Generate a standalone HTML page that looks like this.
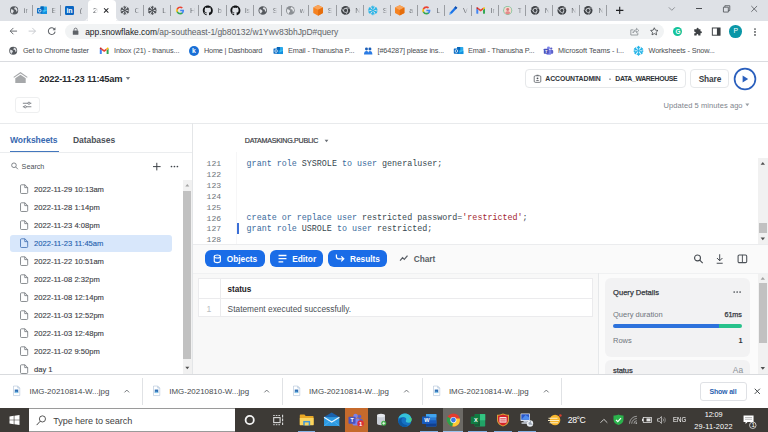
<!DOCTYPE html>
<html><head><meta charset="utf-8"><title>Worksheets - Snowflake</title>
<style>
*{box-sizing:border-box;margin:0;padding:0}
html,body{width:768px;height:432px;overflow:hidden;background:#fff}
body{position:relative;font-family:"Liberation Sans",sans-serif;color:#222}
.a{position:absolute;white-space:nowrap}
.t{position:absolute;white-space:nowrap;line-height:1}
svg{position:absolute;overflow:visible}
.tabt{font-size:7.4px;color:#6a6e73}
.sep{position:absolute;top:5px;width:1px;height:11px;background:#9a9da2}
.bmt{font-size:7.3px;color:#4a4d51;top:47.1px}
.ws{font-size:7.6px;color:#3c4046;-webkit-text-stroke:.12px #3c4046}
.ln{font-family:"Liberation Mono",monospace;font-size:8.1px;color:#70757b;text-align:right;width:20px;left:201.2px}
.code{font-family:"Liberation Mono",monospace;font-size:8.37px;color:#37474f;left:246.6px}
.kw{color:#3a6a9c}
.str{color:#a3262f}
.btn{position:absolute;height:17px;border-radius:6px;background:#1a6ce7;color:#fff;font-weight:bold;font-size:8.3px}
.dl{font-size:7.9px;color:#45494d;top:387.5px;letter-spacing:.02px}
</style></head><body>

<div class="a" style="left:0;top:0;width:768px;height:20.500px;background:#dee1e6"></div>
<div class="a" style="left:87.500px;top:0;width:28.500px;height:21px;background:#fff;border-radius:4px 4px 0 0"></div>
<svg style="left:83px;top:16px" width="5" height="5" viewBox="0 0 5 5"><g transform="translate(0.500 0.500) scale(1.0000)"><path d="M4 0v4H0a4 4 0 0 0 4-4z" fill="#fff"/></g></svg>
<svg style="left:116px;top:16px" width="5" height="5" viewBox="0 0 5 5"><g transform="translate(0.000 0.500) scale(1.0000)"><path d="M0 0v4h4a4 4 0 0 1-4-4z" fill="#fff"/></g></svg>
<svg style="left:10px;top:6px" width="9" height="9" viewBox="0 0 9 9"><svg x="0.000" y="0.300" width="8.200" height="8.200" viewBox="0 0 16 16" style="position:static"><circle cx="8" cy="8" r="8" fill="#55595e"/><path d="M2 6c2-.5 3 .5 4.500 1.500s1 2.500 0 3.500-1.500 2.500-2 3.500C2.500 13 1 10 2 6zM9 1.500c1 1 .5 2-.5 2.500s0 2 1.500 2 2.500 1.500 2 3 1.500 1.500 2.500 0c.8-3-1.500-6.500-5.500-7.500z" fill="#dfe1e5"/></svg></svg>
<div class="t tabt" style="left:23.8px;top:6.800px;width:4.800px;overflow:hidden;-webkit-mask-image:linear-gradient(90deg,#000 30%,transparent);mask-image:linear-gradient(90deg,#000 30%,transparent)">ir</div>
<div class="sep" style="left:31.7px"></div>
<svg style="left:37px;top:5px" width="11" height="10" viewBox="0 0 11 10"><svg x="0.000" y="0.900" width="10.000" height="9.000" viewBox="0 0 20 18" style="position:static"><rect x="7" y="1" width="13" height="15" rx="1.500" fill="#28a8ea"/><rect x="7" y="1" width="6.500" height="7" fill="#0364b8"/><rect x="13.500" y="8" width="6.500" height="8" fill="#50d9ff" opacity=".55"/><path d="M7 16l13-7v6.500c0 .5-.5.500-1 .5z" fill="#1490df"/><rect x="0" y="4" width="11" height="11" rx="1.200" fill="#0f6fc5"/><ellipse cx="5.500" cy="9.500" rx="2.600" ry="3" fill="none" stroke="#fff" stroke-width="1.500"/></svg></svg>
<div class="t tabt" style="left:51.7px;top:6.800px;width:4.800px;overflow:hidden;-webkit-mask-image:linear-gradient(90deg,#000 30%,transparent);mask-image:linear-gradient(90deg,#000 30%,transparent)">E</div>
<div class="sep" style="left:59.8px"></div>
<div class="a" style="left:65.3px;top:6.10px;width:8.6px;height:8.6px;border-radius:1.200px;background:#0a66c2"></div>
<div class="t" style="left:66.6px;top:6.80px;font-size:7px;font-weight:bold;color:#fff;letter-spacing:-.3px">in</div>
<div class="t tabt" style="left:79.7px;top:6.800px;width:4.800px;overflow:hidden;-webkit-mask-image:linear-gradient(90deg,#000 30%,transparent);mask-image:linear-gradient(90deg,#000 30%,transparent)">(</div>
<svg style="left:120px;top:5px;color:#505357" width="10" height="10" viewBox="0 0 10 10"><svg x="0.300" y="0.900" width="9.000" height="9.000" viewBox="0 0 20 20" style="position:static"><g stroke="currentColor" stroke-linecap="round" stroke-linejoin="round" fill="none"><path d="M10 1.200v5.300M10 13.500v5.300M2.400 5.600l4.600 2.650M13 11.750l4.600 2.650M2.400 14.400l4.600-2.650M13 8.250l4.600-2.650" stroke-width="2.600"/><path d="M7.300 2.600L10 5.200l2.700-2.600M7.300 17.400L10 14.800l2.700 2.600M1.300 8.700l3.600-1-.9-3.600M18.700 11.300l-3.600 1 .9 3.600M1.300 11.300l3.600 1-.9 3.600M18.700 8.700l-3.600-1 .9-3.600" stroke-width="2.200"/></g><path d="M10 7l3 3-3 3-3-3z" fill="currentColor"/></svg></svg>
<div class="t tabt" style="left:134.5px;top:6.800px;width:4.800px;overflow:hidden;-webkit-mask-image:linear-gradient(90deg,#000 30%,transparent);mask-image:linear-gradient(90deg,#000 30%,transparent)">C</div>
<div class="sep" style="left:142.8px"></div>
<svg style="left:147px;top:5px;color:#4a4d52" width="10" height="10" viewBox="0 0 10 10"><svg x="0.800" y="0.900" width="9.000" height="9.000" viewBox="0 0 20 20" style="position:static"><g stroke="currentColor" stroke-linecap="round" stroke-linejoin="round" fill="none"><path d="M10 1.200v5.300M10 13.500v5.300M2.400 5.600l4.600 2.650M13 11.750l4.600 2.650M2.400 14.400l4.600-2.650M13 8.250l4.600-2.650" stroke-width="2.600"/><path d="M7.300 2.600L10 5.200l2.700-2.600M7.300 17.400L10 14.800l2.700 2.600M1.300 8.700l3.600-1-.9-3.600M18.700 11.300l-3.600 1 .9 3.600M1.300 11.300l3.600 1-.9 3.600M18.700 8.700l-3.600-1 .9-3.600" stroke-width="2.200"/></g><path d="M10 7l3 3-3 3-3-3z" fill="currentColor"/></svg></svg>
<div class="t tabt" style="left:162.3px;top:6.800px;width:4.800px;overflow:hidden;-webkit-mask-image:linear-gradient(90deg,#000 30%,transparent);mask-image:linear-gradient(90deg,#000 30%,transparent)">L</div>
<div class="sep" style="left:170.2px"></div>
<svg style="left:176px;top:6px" width="9" height="9" viewBox="0 0 9 9"><svg x="0.200" y="0.400" width="8.000" height="8.000" viewBox="0 0 18 18" style="position:static"><path d="M17.640 9.200c0-.64-.06-1.250-.16-1.840H9v3.480h4.840a4.140 4.140 0 0 1-1.800 2.720v2.260h2.920c1.700-1.570 2.680-3.880 2.680-6.620z" fill="#4285f4"/><path d="M9 18c2.430 0 4.470-.8 5.960-2.180l-2.920-2.260c-.8.540-1.840.86-3.040.86-2.340 0-4.330-1.580-5.040-3.710H.96v2.330A9 9 0 0 0 9 18z" fill="#34a853"/><path d="M3.960 10.710A5.400 5.400 0 0 1 3.680 9c0-.6.100-1.170.28-1.710V4.960H.96A9 9 0 0 0 0 9c0 1.450.35 2.830.96 4.040l3-2.330z" fill="#fbbc05"/><path d="M9 3.580c1.320 0 2.500.45 3.440 1.350l2.580-2.590C13.460.89 11.430 0 9 0A9 9 0 0 0 .96 4.960l3 2.330C4.670 5.160 6.660 3.580 9 3.580z" fill="#ea4335"/></svg></svg>
<div class="t tabt" style="left:190px;top:6.800px;width:4.800px;overflow:hidden;-webkit-mask-image:linear-gradient(90deg,#000 30%,transparent);mask-image:linear-gradient(90deg,#000 30%,transparent)">H</div>
<div class="sep" style="left:198.2px"></div>
<svg style="left:202px;top:5px" width="11" height="11" viewBox="0 0 11 11"><svg x="0.800" y="0.400" width="10.000" height="10.000" viewBox="0 0 16 16" style="position:static"><path fill="#111315" d="M8 0C3.580 0 0 3.580 0 8c0 3.540 2.290 6.530 5.470 7.590.4.070.55-.17.550-.38 0-.19-.01-.82-.01-1.490-2.010.37-2.530-.49-2.690-.94-.09-.23-.48-.94-.82-1.130-.28-.15-.68-.52-.01-.53.630-.01 1.080.58 1.230.82.720 1.210 1.870.87 2.330.66.070-.52.280-.87.510-1.070-1.780-.2-3.640-.89-3.640-3.950 0-.87.310-1.590.82-2.150-.08-.2-.36-1.020.08-2.120 0 0 .67-.21 2.200.82.640-.18 1.320-.27 2-.27s1.360.09 2 .27c1.530-1.040 2.200-.82 2.200-.82.440 1.100.16 1.920.08 2.120.51.560.82 1.270.82 2.150 0 3.070-1.870 3.750-3.650 3.950.29.250.54.730.54 1.480 0 1.070-.01 1.930-.01 2.200 0 .21.150.46.550.38A8.010 8.010 0 0 0 16 8c0-4.420-3.580-8-8-8z"/></svg></svg>
<div class="t tabt" style="left:217.8px;top:6.800px;width:4.800px;overflow:hidden;-webkit-mask-image:linear-gradient(90deg,#000 30%,transparent);mask-image:linear-gradient(90deg,#000 30%,transparent)">b</div>
<div class="sep" style="left:225.7px"></div>
<svg style="left:230px;top:5px" width="11" height="11" viewBox="0 0 11 11"><svg x="0.400" y="0.400" width="10.000" height="10.000" viewBox="0 0 16 16" style="position:static"><path fill="#111315" d="M8 0C3.580 0 0 3.580 0 8c0 3.540 2.290 6.530 5.470 7.590.4.070.55-.17.550-.38 0-.19-.01-.82-.01-1.490-2.010.37-2.530-.49-2.690-.94-.09-.23-.48-.94-.82-1.130-.28-.15-.68-.52-.01-.53.630-.01 1.080.58 1.230.82.720 1.210 1.870.87 2.330.66.070-.52.280-.87.510-1.070-1.780-.2-3.640-.89-3.640-3.950 0-.87.310-1.590.82-2.150-.08-.2-.36-1.020.08-2.120 0 0 .67-.21 2.200.82.640-.18 1.320-.27 2-.27s1.360.09 2 .27c1.530-1.040 2.200-.82 2.200-.82.440 1.100.16 1.920.08 2.120.51.560.82 1.270.82 2.150 0 3.070-1.870 3.750-3.650 3.950.29.250.54.730.54 1.480 0 1.070-.01 1.930-.01 2.200 0 .21.150.46.550.38A8.010 8.010 0 0 0 16 8c0-4.420-3.580-8-8-8z"/></svg></svg>
<div class="t tabt" style="left:244.8px;top:6.800px;width:4.800px;overflow:hidden;-webkit-mask-image:linear-gradient(90deg,#000 30%,transparent);mask-image:linear-gradient(90deg,#000 30%,transparent)">Is</div>
<div class="sep" style="left:253.2px"></div>
<svg style="left:258px;top:6px" width="10" height="9" viewBox="0 0 10 9"><svg x="0.500" y="0.150" width="8.500" height="8.500" viewBox="0 0 16 16" style="position:static"><circle cx="8" cy="8" r="8" fill="#55595e"/><path d="M2 6c2-.5 3 .5 4.500 1.500s1 2.500 0 3.500-1.500 2.500-2 3.500C2.500 13 1 10 2 6zM9 1.500c1 1 .5 2-.5 2.500s0 2 1.500 2 2.500 1.500 2 3 1.500 1.500 2.500 0c.8-3-1.500-6.500-5.500-7.500z" fill="#dfe1e5"/></svg></svg>
<div class="t tabt" style="left:272.7px;top:6.800px;width:4.800px;overflow:hidden;-webkit-mask-image:linear-gradient(90deg,#000 30%,transparent);mask-image:linear-gradient(90deg,#000 30%,transparent)">S</div>
<div class="sep" style="left:280.7px"></div>
<svg style="left:286px;top:6px" width="9" height="9" viewBox="0 0 9 9"><svg x="0.000" y="0.000" width="8.800" height="8.800" viewBox="0 0 16 16" style="position:static"><circle cx="8" cy="8" r="8" fill="#8b8f94"/><path d="M2 6c2-.5 3 .5 4.500 1.500s1 2.500 0 3.500-1.500 2.500-2 3.500C2.500 13 1 10 2 6zM9 1.500c1 1 .5 2-.5 2.500s0 2 1.500 2 2.500 1.500 2 3 1.500 1.500 2.500 0c.8-3-1.500-6.500-5.500-7.500z" fill="#e6e8eb"/></svg></svg>
<div class="t tabt" style="left:299.8px;top:6.800px;width:4.800px;overflow:hidden;-webkit-mask-image:linear-gradient(90deg,#000 30%,transparent);mask-image:linear-gradient(90deg,#000 30%,transparent)">w</div>
<div class="sep" style="left:308.0px"></div>
<svg style="left:312px;top:5px" width="12" height="11" viewBox="0 0 12 11"><svg x="0.700" y="0.000" width="10.800" height="10.800" viewBox="0 0 20 20" style="position:static"><path d="M10 0l9 4.500v10.500L10 20 1 15V4.500z" fill="#f58220"/><path d="M10 0l9 4.500L10 9 1 4.500z" fill="#f9a45a"/><path d="M10 9l9-4.500v10.500L10 20z" fill="#e56d0c"/></svg></svg>
<div class="t tabt" style="left:327.7px;top:6.800px;width:4.800px;overflow:hidden;-webkit-mask-image:linear-gradient(90deg,#000 30%,transparent);mask-image:linear-gradient(90deg,#000 30%,transparent)">S</div>
<div class="sep" style="left:336.0px"></div>
<svg style="left:341px;top:5px" width="10" height="10" viewBox="0 0 10 10"><svg x="0.100" y="0.900" width="9.000" height="9.000" viewBox="0 0 16 16" style="position:static"><circle cx="8" cy="8" r="8" fill="#3f4246"/><circle cx="8" cy="8" r="4.300" fill="#dee1e6"/><circle cx="8" cy="8" r="2.900" fill="#3f4246"/><path d="M8 3.700h7M4.300 10.200L.8 4.500M11.700 10.200L8.200 16" stroke="#dee1e6" stroke-width="1.100"/></svg></svg>
<div class="t tabt" style="left:355.2px;top:6.800px;width:4.800px;overflow:hidden;-webkit-mask-image:linear-gradient(90deg,#000 30%,transparent);mask-image:linear-gradient(90deg,#000 30%,transparent)">N</div>
<div class="sep" style="left:363.0px"></div>
<svg style="left:368px;top:5px;color:#29b5e8" width="10" height="11" viewBox="0 0 10 11"><svg x="0.000" y="0.550" width="9.700" height="9.700" viewBox="0 0 20 20" style="position:static"><g stroke="currentColor" stroke-linecap="round" stroke-linejoin="round" fill="none"><path d="M10 1.200v5.300M10 13.500v5.300M2.400 5.600l4.600 2.650M13 11.750l4.600 2.650M2.400 14.400l4.600-2.650M13 8.250l4.600-2.650" stroke-width="2.600"/><path d="M7.300 2.600L10 5.200l2.700-2.600M7.300 17.400L10 14.800l2.700 2.600M1.300 8.700l3.600-1-.9-3.600M18.700 11.300l-3.600 1 .9 3.600M1.300 11.300l3.600 1-.9 3.600M18.700 8.700l-3.600-1 .9-3.600" stroke-width="2.200"/></g><path d="M10 7l3 3-3 3-3-3z" fill="currentColor"/></svg></svg>
<div class="t tabt" style="left:382.7px;top:6.800px;width:4.800px;overflow:hidden;-webkit-mask-image:linear-gradient(90deg,#000 30%,transparent);mask-image:linear-gradient(90deg,#000 30%,transparent)">S</div>
<div class="sep" style="left:390.2px"></div>
<svg style="left:394px;top:5px" width="11" height="11" viewBox="0 0 11 11"><svg x="0.500" y="0.200" width="10.400" height="10.400" viewBox="0 0 20 20" style="position:static"><path d="M10 0l9 4.500v10.500L10 20 1 15V4.500z" fill="#f58220"/><path d="M10 0l9 4.500L10 9 1 4.500z" fill="#f9a45a"/><path d="M10 9l9-4.500v10.500L10 20z" fill="#e56d0c"/></svg></svg>
<div class="t tabt" style="left:409.3px;top:6.800px;width:4.800px;overflow:hidden;-webkit-mask-image:linear-gradient(90deg,#000 30%,transparent);mask-image:linear-gradient(90deg,#000 30%,transparent)">a</div>
<div class="sep" style="left:417.2px"></div>
<svg style="left:422px;top:6px" width="9" height="9" viewBox="0 0 9 9"><svg x="0.300" y="0.300" width="8.200" height="8.200" viewBox="0 0 18 18" style="position:static"><path d="M17.640 9.200c0-.64-.06-1.250-.16-1.840H9v3.480h4.840a4.140 4.140 0 0 1-1.800 2.720v2.260h2.920c1.700-1.570 2.680-3.880 2.680-6.620z" fill="#4285f4"/><path d="M9 18c2.430 0 4.470-.8 5.960-2.180l-2.920-2.260c-.8.540-1.840.86-3.040.86-2.340 0-4.330-1.580-5.040-3.710H.96v2.330A9 9 0 0 0 9 18z" fill="#34a853"/><path d="M3.960 10.710A5.400 5.400 0 0 1 3.680 9c0-.6.100-1.170.28-1.710V4.960H.96A9 9 0 0 0 0 9c0 1.450.35 2.830.96 4.040l3-2.330z" fill="#fbbc05"/><path d="M9 3.580c1.320 0 2.500.45 3.440 1.350l2.580-2.590C13.460.89 11.430 0 9 0A9 9 0 0 0 .96 4.960l3 2.330C4.670 5.160 6.660 3.580 9 3.580z" fill="#ea4335"/></svg></svg>
<div class="t tabt" style="left:436.5px;top:6.800px;width:4.800px;overflow:hidden;-webkit-mask-image:linear-gradient(90deg,#000 30%,transparent);mask-image:linear-gradient(90deg,#000 30%,transparent)">L</div>
<div class="sep" style="left:443.8px"></div>
<svg style="left:448px;top:5px" width="10" height="10" viewBox="0 0 10 10"><svg x="0.800" y="0.900" width="9.000" height="9.000" viewBox="0 0 20 20" style="position:static"><path d="M15 1l4 3L7 17l-5.500 2.500L3 14z" fill="#1a73e8"/><path d="M15 1l4 3-3 3.200-3.800-3z" fill="#174ea6"/><path d="M1.500 19.500L3 14l4 3z" fill="#4ea1f5"/></svg></svg>
<div class="t tabt" style="left:463px;top:6.800px;width:4.800px;overflow:hidden;-webkit-mask-image:linear-gradient(90deg,#000 30%,transparent);mask-image:linear-gradient(90deg,#000 30%,transparent)">V</div>
<div class="sep" style="left:470.8px"></div>
<svg style="left:476px;top:7px" width="10" height="7" viewBox="0 0 10 7"><svg x="0.300" y="0.140" width="8.700" height="6.520" viewBox="0 0 20 15" style="position:static"><path d="M0 2.500V14a1 1 0 0 0 1 1h3.500V6z" fill="#4285f4"/><path d="M20 2.500V14a1 1 0 0 1-1 1h-3.500V6z" fill="#34a853"/><path d="M4.500 6V1.500L10 5.700l5.500-4.200V6L10 10.200z" fill="#ea4335"/><path d="M0 2.500C0 .5 2 -.5 3.500.7l1 .8V6L0 2.600z" fill="#c5221f"/><path d="M20 2.500c0-2-2-3-3.500-1.800l-1 .8V6L20 2.600z" fill="#fbbc04"/></svg></svg>
<div class="t tabt" style="left:490.5px;top:6.800px;width:4.800px;overflow:hidden;-webkit-mask-image:linear-gradient(90deg,#000 30%,transparent);mask-image:linear-gradient(90deg,#000 30%,transparent)">Ir</div>
<div class="sep" style="left:497.8px"></div>
<svg style="left:503px;top:5px" width="10" height="10" viewBox="0 0 10 10"><svg x="0.200" y="0.900" width="9.000" height="9.000" viewBox="0 0 16 16" style="position:static"><circle cx="8" cy="8" r="8" fill="#7cc49a"/><circle cx="8" cy="8" r="6.500" fill="#f4d9d0"/><circle cx="8" cy="6.500" r="2.600" fill="#d9787a"/><path d="M3.500 13c.5-3 2.500-3.700 4.500-3.700s4 .7 4.500 3.700a6.500 6.500 0 0 1-9 0z" fill="#e58a8a"/></svg></svg>
<div class="t tabt" style="left:517.7px;top:6.800px;width:4.800px;overflow:hidden;-webkit-mask-image:linear-gradient(90deg,#000 30%,transparent);mask-image:linear-gradient(90deg,#000 30%,transparent)">T</div>
<div class="sep" style="left:525.0px"></div>
<svg style="left:530px;top:6px" width="10" height="9" viewBox="0 0 10 9"><svg x="0.800" y="0.100" width="8.600" height="8.600" viewBox="0 0 16 16" style="position:static"><circle cx="8" cy="8" r="8" fill="#3f4246"/><circle cx="8" cy="8" r="4.300" fill="#dee1e6"/><circle cx="8" cy="8" r="2.900" fill="#3f4246"/><path d="M8 3.700h7M4.300 10.200L.8 4.500M11.700 10.200L8.200 16" stroke="#dee1e6" stroke-width="1.100"/></svg></svg>
<div class="t tabt" style="left:544.7px;top:6.800px;width:4.800px;overflow:hidden;-webkit-mask-image:linear-gradient(90deg,#000 30%,transparent);mask-image:linear-gradient(90deg,#000 30%,transparent)">N</div>
<div class="sep" style="left:552.2px"></div>
<svg style="left:557px;top:6px" width="10" height="9" viewBox="0 0 10 9"><svg x="0.500" y="0.000" width="8.800" height="8.800" viewBox="0 0 16 16" style="position:static"><circle cx="8" cy="8" r="8" fill="#3f4246"/><circle cx="8" cy="8" r="4.300" fill="#dee1e6"/><circle cx="8" cy="8" r="2.900" fill="#3f4246"/><path d="M8 3.700h7M4.300 10.200L.8 4.500M11.700 10.200L8.200 16" stroke="#dee1e6" stroke-width="1.100"/></svg></svg>
<div class="t tabt" style="left:571.3px;top:6.800px;width:4.800px;overflow:hidden;-webkit-mask-image:linear-gradient(90deg,#000 30%,transparent);mask-image:linear-gradient(90deg,#000 30%,transparent)">N</div>
<div class="sep" style="left:579.0px"></div>
<svg style="left:583px;top:6px" width="10" height="9" viewBox="0 0 10 9"><svg x="0.800" y="0.050" width="8.700" height="8.700" viewBox="0 0 16 16" style="position:static"><circle cx="8" cy="8" r="8" fill="#3f4246"/><circle cx="8" cy="8" r="4.300" fill="#dee1e6"/><circle cx="8" cy="8" r="2.900" fill="#3f4246"/><path d="M8 3.700h7M4.300 10.200L.8 4.500M11.700 10.200L8.200 16" stroke="#dee1e6" stroke-width="1.100"/></svg></svg>
<div class="t tabt" style="left:598.5px;top:6.800px;width:4.800px;overflow:hidden;-webkit-mask-image:linear-gradient(90deg,#000 30%,transparent);mask-image:linear-gradient(90deg,#000 30%,transparent)">N</div>
<div class="sep" style="left:606.1px"></div>
<div class="t tabt" style="left:93px;top:6.800px;width:5px;overflow:hidden;color:#5f6368;-webkit-mask-image:linear-gradient(90deg,#000 30%,transparent);mask-image:linear-gradient(90deg,#000 30%,transparent)">20</div>
<svg style="left:103px;top:7px" width="6" height="7" viewBox="0 0 6 7"><g transform="translate(0.500 0.700) scale(0.5400)"><path d="M1 1l8 8M9 1l-8 8" stroke="#202124" stroke-width="1.900"/></g></svg>
<svg style="left:616px;top:6px" width="8" height="9" viewBox="0 0 8 9"><g transform="translate(0.000 0.700) scale(0.7400)"><path d="M5 0v10M0 5h10" stroke="#202124" stroke-width="1.500"/></g></svg>
<svg style="left:668px;top:7px" width="8" height="5" viewBox="0 0 8 5"><g transform="translate(0.500 0.020) scale(0.6600)"><path d="M.5.500L5 5 9.500.5" fill="none" stroke="#7a7d82" stroke-width="1.200"/></g></svg>
<div class="a" style="left:695.500px;top:8.400px;width:6.800px;height:.8px;background:#4a4d52"></div>
<svg style="left:723px;top:5px" width="8" height="8" viewBox="0 0 8 8"><g transform="translate(0.000 0.300) scale(0.7200)"><path d="M.6 2.600h6.800v6.800H.6zM2.600 2.600V.6h6.800v6.800H7.400" fill="none" stroke="#4a4d52" stroke-width="1.100"/></g></svg>
<svg style="left:751px;top:5px" width="7" height="8" viewBox="0 0 7 8"><g transform="translate(0.000 0.700) scale(0.6400)"><path d="M.5.500l9 9M9.500.5l-9 9" stroke="#4a4d52" stroke-width="1.200"/></g></svg>
<div class="a" style="left:0;top:20.500px;width:768px;height:40.500px;background:#fff"></div>
<div class="a" style="left:0;top:61px;width:768px;height:1px;background:#dadce0"></div>
<svg style="left:9px;top:27px" width="9" height="9" viewBox="0 0 9 9"><g transform="translate(0.500 0.200) scale(0.4875)"><path d="M15.500 8H1.500M8 1.500L1.500 8 8 14.500" fill="none" stroke="#5f6368" stroke-width="1.900"/></g></svg>
<svg style="left:28px;top:27px" width="9" height="9" viewBox="0 0 9 9"><g transform="translate(0.400 0.200) scale(0.4875)"><path d="M.5 8h14M8 1.500L14.500 8 8 14.500" fill="none" stroke="#c4c7cb" stroke-width="1.900"/></g></svg>
<svg style="left:47px;top:26px" width="10" height="10" viewBox="0 0 10 10"><g transform="translate(0.400 0.800) scale(0.5375)"><path d="M13.600 5A6.300 6.300 0 1 0 14.300 9" fill="none" stroke="#5f6368" stroke-width="1.900"/><path d="M15 1v5.200H9.800z" fill="#5f6368"/></g></svg>
<div class="a" style="left:65px;top:23.800px;width:599px;height:15.400px;border-radius:7.700px;background:#f1f3f4"></div>
<svg style="left:72px;top:27px" width="7" height="8" viewBox="0 0 7 8"><g transform="translate(0.800 0.636) scale(0.5091)"><rect x="0" y="5.500" width="11" height="8.500" rx="1.200" fill="#5f6368"/><path d="M2.500 6V4a3 3 0 0 1 6 0v2" fill="none" stroke="#5f6368" stroke-width="1.700"/></g></svg>
<div class="t" style="left:85.200px;top:28px;font-size:8.500px;color:#202124;letter-spacing:-.06px">app.snowflake.com<span style="color:#5f6368">/ap-southeast-1/gb80132/w1Ywv83bhJpD#query</span></div>
<svg style="left:630px;top:27px" width="10" height="9" viewBox="0 0 10 9"><g transform="translate(0.041 0.000) scale(0.5176)"><path d="M6.500 5.500H1.500V15.500H15V11" fill="none" stroke="#80868b" stroke-width="1.500"/><path d="M5.500 11.500c.5-4 3-6 7-6V2.500L17 6.800l-4.500 4.300V8c-3 0-5 1-7 3.500z" fill="none" stroke="#80868b" stroke-width="1.400" stroke-linejoin="round"/></g></svg>
<svg style="left:650px;top:27px" width="9" height="9" viewBox="0 0 9 9"><g transform="translate(0.000 0.115) scale(0.4300)"><path d="M10 1.500l2.600 5.500 6 .8-4.400 4.200 1.100 6L10 15.100 4.700 18l1.100-6L1.400 7.800l6-.8z" fill="none" stroke="#3c4043" stroke-width="1.800" stroke-linejoin="round"/></g></svg>
<div class="a" style="left:673.300px;top:27.200px;width:9.200px;height:9.200px;border-radius:50%;background:#15c39a"></div>
<div class="t" style="left:675.600px;top:28.700px;font-size:6.400px;font-weight:bold;color:#fff">G</div>
<svg style="left:693px;top:27px" width="9" height="10" viewBox="0 0 9 10"><g transform="translate(0.300 0.400) scale(0.4778)"><path d="M7 2.500a2 2 0 0 1 4 0V4h4v4h1a2 2 0 0 1 0 4h-1v5h-4.500v-1.200a1.800 1.800 0 0 0-3.600 0V17H2v-4.500h1.200a1.800 1.800 0 0 0 0-3.600H2V4h5z" fill="#3c4043"/></g></svg>
<svg style="left:711px;top:27px" width="10" height="9" viewBox="0 0 10 9"><g transform="translate(0.859 0.500) scale(0.4824)"><rect x="1" y="1" width="16" height="15" fill="none" stroke="#3c4043" stroke-width="2"/><rect x="10.500" y="1" width="6.500" height="15" fill="#3c4043"/></g></svg>
<div class="a" style="left:729.400px;top:25.400px;width:12.600px;height:12.600px;border-radius:50%;background:#0a97a7"></div>
<div class="t" style="left:733.600px;top:28.400px;font-size:6.800px;color:#fff">P</div>
<svg style="left:754px;top:28px" width="3" height="9" viewBox="0 0 3 9"><g transform="translate(0.000 0.000) scale(1.0000)"><circle cx="1" cy="1" r=".85" fill="#3c4043"/><circle cx="1" cy="3.950" r=".85" fill="#3c4043"/><circle cx="1" cy="6.900" r=".85" fill="#3c4043"/></g></svg>
<svg style="left:9px;top:46px" width="9" height="9" viewBox="0 0 9 9"><svg x="0.200" y="0.800" width="8.000" height="8.000" viewBox="0 0 16 16" style="position:static"><circle cx="8" cy="8" r="8" fill="#55595e"/><path d="M2 6c2-.5 3 .5 4.500 1.500s1 2.500 0 3.500-1.500 2.500-2 3.500C2.500 13 1 10 2 6zM9 1.500c1 1 .5 2-.5 2.500s0 2 1.500 2 2.500 1.500 2 3 1.500 1.500 2.500 0c.8-3-1.500-6.500-5.500-7.500z" fill="#dfe1e5"/></svg></svg>
<div class="t bmt" style="left:23px;letter-spacing:-0.11px">Get to Chrome faster</div>
<svg style="left:99px;top:47px" width="10" height="8" viewBox="0 0 10 8"><svg x="0.800" y="0.500" width="8.800" height="6.600" viewBox="0 0 20 15" style="position:static"><path d="M0 2.500V14a1 1 0 0 0 1 1h3.500V6z" fill="#4285f4"/><path d="M20 2.500V14a1 1 0 0 1-1 1h-3.500V6z" fill="#34a853"/><path d="M4.500 6V1.500L10 5.700l5.500-4.200V6L10 10.200z" fill="#ea4335"/><path d="M0 2.500C0 .5 2 -.5 3.500.7l1 .8V6L0 2.600z" fill="#c5221f"/><path d="M20 2.500c0-2-2-3-3.500-1.800l-1 .8V6L20 2.600z" fill="#fbbc04"/></svg></svg>
<div class="t bmt" style="left:114px;letter-spacing:-0.09px">Inbox (21) - thanus...</div>
<div class="a" style="left:189px;top:45.800px;width:10px;height:10px;border-radius:50%;background:#1a6fd6"></div>
<div class="t" style="left:191.900px;top:47.500px;font-size:6.800px;font-weight:bold;color:#fff">k</div>
<div class="t bmt" style="left:204px;letter-spacing:-0.18px">Home | Dashboard</div>
<svg style="left:273px;top:46px" width="11" height="10" viewBox="0 0 11 10"><svg x="0.500" y="0.520" width="9.500" height="8.550" viewBox="0 0 20 18" style="position:static"><rect x="7" y="1" width="13" height="15" rx="1.500" fill="#28a8ea"/><rect x="7" y="1" width="6.500" height="7" fill="#0364b8"/><rect x="13.500" y="8" width="6.500" height="8" fill="#50d9ff" opacity=".55"/><path d="M7 16l13-7v6.500c0 .5-.5.500-1 .5z" fill="#1490df"/><rect x="0" y="4" width="11" height="11" rx="1.200" fill="#0f6fc5"/><ellipse cx="5.500" cy="9.500" rx="2.600" ry="3" fill="none" stroke="#fff" stroke-width="1.500"/></svg></svg>
<div class="t bmt" style="left:288px;letter-spacing:-0.13px">Email - Thanusha P...</div>
<svg style="left:364px;top:47px" width="9" height="8" viewBox="0 0 9 8"><g transform="translate(0.000 0.094) scale(0.4941)"><circle cx="5" cy="4" r="3" fill="#1c5fb8"/><circle cx="12" cy="4" r="3" fill="#1c5fb8"/><path d="M0 15c0-5 2-7 5-7s4 2 3.500 4c.5-2 1.500-4 3.500-4 3 0 5 2 5 7z" fill="#2a7be4"/></g></svg>
<div class="t bmt" style="left:377.5px;letter-spacing:-0.13px">[#64287] please ins...</div>
<svg style="left:453px;top:46px" width="11" height="10" viewBox="0 0 11 10"><svg x="0.800" y="0.520" width="9.500" height="8.550" viewBox="0 0 20 18" style="position:static"><rect x="7" y="1" width="13" height="15" rx="1.500" fill="#28a8ea"/><rect x="7" y="1" width="6.500" height="7" fill="#0364b8"/><rect x="13.500" y="8" width="6.500" height="8" fill="#50d9ff" opacity=".55"/><path d="M7 16l13-7v6.500c0 .5-.5.500-1 .5z" fill="#1490df"/><rect x="0" y="4" width="11" height="11" rx="1.200" fill="#0f6fc5"/><ellipse cx="5.500" cy="9.500" rx="2.600" ry="3" fill="none" stroke="#fff" stroke-width="1.500"/></svg></svg>
<div class="t bmt" style="left:468px;letter-spacing:-0.13px">Email - Thanusha P...</div>
<svg style="left:543px;top:46px" width="11" height="10" viewBox="0 0 11 10"><g transform="translate(0.800 0.347) scale(0.4947)"><circle cx="15" cy="4.500" r="2.300" fill="#5b5fc7"/><circle cx="9.500" cy="3.500" r="3" fill="#7b83eb"/><rect x="12" y="7.500" width="7" height="7.500" rx="2" fill="#5b5fc7"/><rect x="5" y="7" width="10" height="10" rx="2" fill="#7b83eb"/><rect x="0" y="5" width="10" height="10" rx="1" fill="#4b53bc"/><text x="5" y="13.200" font-size="8" font-weight="bold" fill="#fff" text-anchor="middle" font-family="Liberation Sans, sans-serif">T</text></g></svg>
<div class="t bmt" style="left:558px;letter-spacing:-0.06px">Microsoft Teams - i...</div>
<svg style="left:633px;top:45px;color:#29b5e8" width="11" height="11" viewBox="0 0 11 11"><svg x="0.500" y="0.800" width="10.000" height="10.000" viewBox="0 0 20 20" style="position:static"><g stroke="currentColor" stroke-linecap="round" stroke-linejoin="round" fill="none"><path d="M10 1.200v5.300M10 13.500v5.300M2.400 5.600l4.600 2.650M13 11.750l4.600 2.650M2.400 14.400l4.600-2.650M13 8.250l4.600-2.650" stroke-width="2.600"/><path d="M7.300 2.600L10 5.200l2.700-2.600M7.300 17.400L10 14.800l2.700 2.600M1.300 8.700l3.600-1-.9-3.600M18.700 11.300l-3.600 1 .9 3.600M1.300 11.300l3.600 1-.9 3.600M18.700 8.700l-3.600-1 .9-3.600" stroke-width="2.200"/></g><path d="M10 7l3 3-3 3-3-3z" fill="currentColor"/></svg></svg>
<div class="t bmt" style="left:648.5px;letter-spacing:-0.13px">Worksheets - Snow...</div>
<svg style="left:13px;top:72px" width="15" height="12" viewBox="0 0 15 12"><g transform="translate(0.300 0.138) scale(0.4966)"><path d="M.8 10.500L14.500 1.200 28.200 10.500" fill="none" stroke="#a6a8aa" stroke-width="2.300"/><path d="M4 12.200L14.500 5.200 25 12.200V22H4z" fill="#a6a8aa"/></g></svg>
<div class="t" style="left:39.200px;top:74.500px;font-size:9.300px;font-weight:bold;color:#26292e;letter-spacing:-.17px">2022-11-23 11:45am</div>
<svg style="left:125px;top:77px" width="6" height="4" viewBox="0 0 6 4"><g transform="translate(0.800 0.033) scale(0.4889)"><path d="M0 0h9L4.500 6z" fill="#7c8187"/></g></svg>
<div class="a" style="left:14.600px;top:96.800px;width:25.200px;height:16.600px;border:1px solid #eeeff0;border-radius:3px;background:#fff"></div>
<svg style="left:22px;top:101px" width="10" height="8" viewBox="0 0 10 8"><g transform="translate(0.850 0.500) scale(0.5000)"><path d="M0 3.500h10M14.500 3.500H17M0 10.500h2.500M7 10.500h10" stroke="#5a5f66" stroke-width="1.500"/><circle cx="12.200" cy="3.500" r="2.200" fill="none" stroke="#5a5f66" stroke-width="1.400"/><circle cx="4.800" cy="10.500" r="2.200" fill="none" stroke="#5a5f66" stroke-width="1.400"/></g></svg>
<div class="a" style="left:525.300px;top:69.300px;width:160.700px;height:19px;border:1px solid #e6e8ea;border-radius:4px;background:#fff"></div>
<svg style="left:533px;top:74px" width="9" height="9" viewBox="0 0 9 9"><g transform="translate(0.700 0.747) scale(0.5067)"><rect x="1" y="2" width="13" height="13" rx="2.200" fill="none" stroke="#4d5258" stroke-width="1.500"/><path d="M5.500 1h4" stroke="#4d5258" stroke-width="1.600"/><circle cx="7.500" cy="7" r="1.800" fill="#4d5258"/><path d="M4 12.500c.5-2.500 6.500-2.500 7 0z" fill="#4d5258"/></g></svg>
<div class="t" style="left:545.300px;top:75.500px;font-size:6.900px;font-weight:bold;color:#2e3237;letter-spacing:-.09px">ACCOUNTADMIN</div>
<svg style="left:609px;top:78px" width="3" height="3" viewBox="0 0 3 3"><g transform="translate(0.000 0.200) scale(1.0000)"><circle cx="1" cy="1" r=".9" fill="#9a9fa5"/></g></svg>
<div class="t" style="left:615.300px;top:75.500px;font-size:6.900px;font-weight:bold;color:#2e3237;letter-spacing:-.37px">DATA_WAREHOUSE</div>
<div class="a" style="left:690.300px;top:69.300px;width:39px;height:19px;border:1px solid #e6e8ea;border-radius:4px;background:#fff"></div>
<div class="t" style="left:698.700px;top:74.700px;font-size:8.300px;font-weight:bold;color:#3a3e44;letter-spacing:-.1px">Share</div>
<svg style="left:733px;top:67px" width="25" height="25" viewBox="0 0 25 25"><g transform="translate(0.000 0.000) scale(1.0000)"><circle cx="12" cy="12" r="10.400" fill="#fff" stroke="#2a5fbd" stroke-width="1.700"/></g></svg>
<svg style="left:742px;top:75px" width="7" height="8" viewBox="0 0 7 8"><g transform="translate(0.600 0.500) scale(0.7000)"><path d="M0 0l8 5-8 5z" fill="#2a5fbd"/></g></svg>
<div class="t" style="left:663.600px;top:101.700px;font-size:7.500px;color:#80858c;letter-spacing:.07px">Updated 5 minutes ago</div>
<svg style="left:745px;top:103px" width="5" height="4" viewBox="0 0 5 4"><g transform="translate(0.300 0.567) scale(0.4444)"><path d="M0 0h9L4.500 6z" fill="#9a9fa5"/></g></svg>
<div class="a" style="left:0;top:122.500px;width:768px;height:1px;background:#e8eaec"></div>
<div class="a" style="left:192.200px;top:123px;width:1px;height:252px;background:#e4e6e8"></div>
<div class="t" style="left:10px;top:136.300px;font-size:8.500px;font-weight:bold;color:#3768b0;letter-spacing:-.05px">Worksheets</div>
<div class="t" style="left:73px;top:136.300px;font-size:8.500px;font-weight:bold;color:#4c5158;letter-spacing:-.05px">Databases</div>
<div class="a" style="left:10px;top:151px;width:48.500px;height:1.900px;background:#4377bd"></div>
<div class="a" style="left:0;top:152.300px;width:192px;height:1px;background:#ebedef"></div>
<svg style="left:11px;top:162px" width="8" height="8" viewBox="0 0 8 8"><g transform="translate(0.000 0.300) scale(0.4933)"><circle cx="6" cy="6" r="4.700" fill="none" stroke="#5a5f66" stroke-width="1.500"/><path d="M9.500 9.500L14 14" stroke="#5a5f66" stroke-width="1.600"/></g></svg>
<div class="t" style="left:21.600px;top:162.600px;font-size:7.200px;color:#4a4f55">Search</div>
<svg style="left:153px;top:162px" width="8" height="9" viewBox="0 0 8 9"><g transform="translate(0.000 0.800) scale(0.7600)"><path d="M5 0v10M0 5h10" stroke="#3c4046" stroke-width="1.300"/></g></svg>
<svg style="left:170px;top:165px" width="9" height="3" viewBox="0 0 9 3"><g transform="translate(0.500 0.500) scale(1.0000)"><circle cx="1" cy="1" r=".85" fill="#3f444a"/><circle cx="3.950" cy="1" r=".85" fill="#3f444a"/><circle cx="6.900" cy="1" r=".85" fill="#3f444a"/></g></svg>
<div class="a" style="left:10px;top:235px;width:162px;height:17px;border-radius:3px;background:#d8e7fb"></div>
<svg style="left:20px;top:184px;color:#676c72" width="9" height="11" viewBox="0 0 9 11"><svg x="0.000" y="0.300" width="8.200" height="9.700" viewBox="0 0 16 19" style="position:static"><path d="M2.800 1h6.700L15 6.300V16.200a1.800 1.800 0 0 1-1.800 1.800H2.800A1.800 1.800 0 0 1 1 16.200V2.800A1.800 1.800 0 0 1 2.800 1zM9.300 1v5.500H15" fill="none" stroke="currentColor" stroke-width="1.500" stroke-linejoin="round"/></svg></svg>
<div class="t ws" style="left:34px;top:185.5px">2022-11-29 10:13am</div>
<svg style="left:20px;top:202px;color:#676c72" width="9" height="11" viewBox="0 0 9 11"><svg x="0.000" y="0.300" width="8.200" height="9.700" viewBox="0 0 16 19" style="position:static"><path d="M2.800 1h6.700L15 6.300V16.200a1.800 1.800 0 0 1-1.800 1.800H2.800A1.800 1.800 0 0 1 1 16.200V2.800A1.800 1.800 0 0 1 2.800 1zM9.300 1v5.500H15" fill="none" stroke="currentColor" stroke-width="1.500" stroke-linejoin="round"/></svg></svg>
<div class="t ws" style="left:34px;top:203.5px">2022-11-28 1:14pm</div>
<svg style="left:20px;top:220px;color:#676c72" width="9" height="11" viewBox="0 0 9 11"><svg x="0.000" y="0.300" width="8.200" height="9.700" viewBox="0 0 16 19" style="position:static"><path d="M2.800 1h6.700L15 6.300V16.200a1.800 1.800 0 0 1-1.800 1.800H2.800A1.800 1.800 0 0 1 1 16.200V2.800A1.800 1.800 0 0 1 2.800 1zM9.300 1v5.500H15" fill="none" stroke="currentColor" stroke-width="1.500" stroke-linejoin="round"/></svg></svg>
<div class="t ws" style="left:34px;top:221.5px">2022-11-23 4:08pm</div>
<svg style="left:20px;top:238px;color:#3466ad" width="9" height="11" viewBox="0 0 9 11"><svg x="0.000" y="0.300" width="8.200" height="9.700" viewBox="0 0 16 19" style="position:static"><path d="M2.800 1h6.700L15 6.300V16.200a1.800 1.800 0 0 1-1.800 1.800H2.800A1.800 1.800 0 0 1 1 16.200V2.800A1.800 1.800 0 0 1 2.800 1zM9.300 1v5.500H15" fill="none" stroke="currentColor" stroke-width="1.500" stroke-linejoin="round"/></svg></svg>
<div class="t ws" style="left:34px;top:239.5px;color:#1f5fae;-webkit-text-stroke-color:#1f5fae">2022-11-23 11:45am</div>
<svg style="left:20px;top:256px;color:#676c72" width="9" height="11" viewBox="0 0 9 11"><svg x="0.000" y="0.300" width="8.200" height="9.700" viewBox="0 0 16 19" style="position:static"><path d="M2.800 1h6.700L15 6.300V16.200a1.800 1.800 0 0 1-1.800 1.800H2.800A1.800 1.800 0 0 1 1 16.200V2.800A1.800 1.800 0 0 1 2.800 1zM9.300 1v5.500H15" fill="none" stroke="currentColor" stroke-width="1.500" stroke-linejoin="round"/></svg></svg>
<div class="t ws" style="left:34px;top:257.5px">2022-11-22 10:51am</div>
<svg style="left:20px;top:274px;color:#676c72" width="9" height="11" viewBox="0 0 9 11"><svg x="0.000" y="0.300" width="8.200" height="9.700" viewBox="0 0 16 19" style="position:static"><path d="M2.800 1h6.700L15 6.300V16.200a1.800 1.800 0 0 1-1.800 1.800H2.800A1.800 1.800 0 0 1 1 16.200V2.800A1.800 1.800 0 0 1 2.800 1zM9.300 1v5.500H15" fill="none" stroke="currentColor" stroke-width="1.500" stroke-linejoin="round"/></svg></svg>
<div class="t ws" style="left:34px;top:275.5px">2022-11-08 2:32pm</div>
<svg style="left:20px;top:292px;color:#676c72" width="9" height="11" viewBox="0 0 9 11"><svg x="0.000" y="0.300" width="8.200" height="9.700" viewBox="0 0 16 19" style="position:static"><path d="M2.800 1h6.700L15 6.300V16.200a1.800 1.800 0 0 1-1.800 1.800H2.800A1.800 1.800 0 0 1 1 16.200V2.800A1.800 1.800 0 0 1 2.800 1zM9.300 1v5.500H15" fill="none" stroke="currentColor" stroke-width="1.500" stroke-linejoin="round"/></svg></svg>
<div class="t ws" style="left:34px;top:293.5px">2022-11-08 12:14pm</div>
<svg style="left:20px;top:310px;color:#676c72" width="9" height="11" viewBox="0 0 9 11"><svg x="0.000" y="0.300" width="8.200" height="9.700" viewBox="0 0 16 19" style="position:static"><path d="M2.800 1h6.700L15 6.300V16.200a1.800 1.800 0 0 1-1.800 1.800H2.800A1.800 1.800 0 0 1 1 16.200V2.800A1.800 1.800 0 0 1 2.800 1zM9.300 1v5.500H15" fill="none" stroke="currentColor" stroke-width="1.500" stroke-linejoin="round"/></svg></svg>
<div class="t ws" style="left:34px;top:311.5px">2022-11-03 12:52pm</div>
<svg style="left:20px;top:328px;color:#676c72" width="9" height="11" viewBox="0 0 9 11"><svg x="0.000" y="0.300" width="8.200" height="9.700" viewBox="0 0 16 19" style="position:static"><path d="M2.800 1h6.700L15 6.300V16.200a1.800 1.800 0 0 1-1.800 1.800H2.800A1.800 1.800 0 0 1 1 16.200V2.800A1.800 1.800 0 0 1 2.800 1zM9.300 1v5.500H15" fill="none" stroke="currentColor" stroke-width="1.500" stroke-linejoin="round"/></svg></svg>
<div class="t ws" style="left:34px;top:329.5px">2022-11-03 12:48pm</div>
<svg style="left:20px;top:346px;color:#676c72" width="9" height="11" viewBox="0 0 9 11"><svg x="0.000" y="0.300" width="8.200" height="9.700" viewBox="0 0 16 19" style="position:static"><path d="M2.800 1h6.700L15 6.300V16.200a1.800 1.800 0 0 1-1.800 1.800H2.800A1.800 1.800 0 0 1 1 16.200V2.800A1.800 1.800 0 0 1 2.800 1zM9.300 1v5.500H15" fill="none" stroke="currentColor" stroke-width="1.500" stroke-linejoin="round"/></svg></svg>
<div class="t ws" style="left:34px;top:347.5px">2022-11-02 9:50pm</div>
<svg style="left:20px;top:364px;color:#676c72" width="9" height="11" viewBox="0 0 9 11"><svg x="0.000" y="0.300" width="8.200" height="9.700" viewBox="0 0 16 19" style="position:static"><path d="M2.800 1h6.700L15 6.300V16.200a1.800 1.800 0 0 1-1.800 1.800H2.800A1.800 1.800 0 0 1 1 16.200V2.800A1.800 1.800 0 0 1 2.800 1zM9.300 1v5.500H15" fill="none" stroke="currentColor" stroke-width="1.500" stroke-linejoin="round"/></svg></svg>
<div class="t ws" style="left:34px;top:365.5px">day 1</div>
<div class="a" style="left:182.500px;top:180px;width:9.700px;height:195px;background:#f1f1f1"></div>
<div class="a" style="left:183.300px;top:190.500px;width:8px;height:168px;background:#c1c1c1"></div>
<svg style="left:185px;top:184px" width="5" height="3" viewBox="0 0 5 3"><g transform="translate(0.300 0.050) scale(0.5000)"><path d="M0 5l4-5 4 5z" fill="#a3a3a3"/></g></svg>
<svg style="left:185px;top:366px" width="5" height="4" viewBox="0 0 5 4"><g transform="translate(0.300 0.850) scale(0.5000)"><path d="M0 0l4 5 4-5z" fill="#505050"/></g></svg>
<div class="t" style="left:244.800px;top:138.100px;font-size:7.100px;color:#3c4046;letter-spacing:-.27px;-webkit-text-stroke:.2px #3c4046">DATAMASKING.PUBLIC</div>
<svg style="left:324px;top:139px" width="5" height="4" viewBox="0 0 5 4"><g transform="translate(0.600 0.633) scale(0.4222)"><path d="M0 0h9L4.500 6z" fill="#6a6f76"/></g></svg>
<div class="a" style="left:236px;top:152px;width:1px;height:92px;background:#f6f6f7"></div>
<div class="t ln" style="top:160.20px">121</div>
<div class="t ln" style="top:171.06px">122</div>
<div class="t ln" style="top:181.92px">123</div>
<div class="t ln" style="top:192.78px">124</div>
<div class="t ln" style="top:203.64px">125</div>
<div class="t ln" style="top:214.50px">126</div>
<div class="t ln" style="top:225.36px">127</div>
<div class="t ln" style="top:236.22px">128</div>
<div class="t code" style="top:159.700px"><span class="kw">grant role</span> SYSROLE <span class="kw">to user</span> generaluser;</div>
<div class="t code" style="top:214px"><span class="kw">create or replace user</span> restricted password=<span class="str">'restricted'</span>;</div>
<div class="t code" style="top:224.860px"><span class="kw">grant role</span> USROLE <span class="kw">to user</span> restricted;</div>
<div class="a" style="left:237.200px;top:223px;width:1.800px;height:10.500px;background:#3b6fd6"></div>
<div class="a" style="left:757.500px;top:158px;width:10.500px;height:85.500px;background:#f1f1f1"></div>
<div class="a" style="left:758.500px;top:222.800px;width:8.500px;height:10.200px;background:#c1c1c1"></div>
<svg style="left:760px;top:162px" width="6" height="3" viewBox="0 0 6 3"><g transform="translate(0.600 0.025) scale(0.5500)"><path d="M0 5l4-5 4 5z" fill="#505050"/></g></svg>
<svg style="left:760px;top:237px" width="6" height="4" viewBox="0 0 6 4"><g transform="translate(0.600 0.425) scale(0.5500)"><path d="M0 0l4 5 4-5z" fill="#505050"/></g></svg>
<div class="a" style="left:193.200px;top:244px;width:574.800px;height:131px;background:#f8f8f8"></div>
<div class="a" style="left:193.200px;top:245px;width:574.800px;height:27.500px;background:#fafafa"></div>
<div class="a" style="left:193.200px;top:244px;width:574.800px;height:1px;background:#ebecee"></div>
<div class="a" style="left:193.200px;top:273px;width:574.800px;height:1px;background:#f0f1f2"></div>
<div class="btn" style="left:205.200px;top:250.200px;width:60px"><span class="t" style="left:21.500px;top:4.400px">Objects</span></div>
<svg style="left:213px;top:254px" width="9" height="10" viewBox="0 0 9 10"><g transform="translate(0.500 0.240) scale(0.5067)"><path d="M1.500 4.500v9c0 1.700 2.700 3 6 3s6-1.300 6-3v-9" fill="none" stroke="#fff" stroke-width="2.200"/><ellipse cx="7.500" cy="4.500" rx="6" ry="3" fill="none" stroke="#fff" stroke-width="2.200"/></g></svg>
<div class="btn" style="left:270.400px;top:250.200px;width:52.400px"><span class="t" style="left:21.800px;top:4.400px">Editor</span></div>
<svg style="left:278px;top:254px" width="9" height="9" viewBox="0 0 9 9"><g transform="translate(0.547 0.500) scale(0.4941)"><path d="M0 2h16M0 8.500h16M0 15h9.500" stroke="#fff" stroke-width="2.700"/></g></svg>
<div class="btn" style="left:328px;top:250.200px;width:58.800px"><span class="t" style="left:22px;top:4.400px">Results</span></div>
<svg style="left:335px;top:254px" width="10" height="9" viewBox="0 0 10 9"><g transform="translate(0.800 0.306) scale(0.5059)"><path d="M1.200 .5v4.500a4 4 0 0 0 4 4h10M10.800 4l5 5-5 5" fill="none" stroke="#fff" stroke-width="2.500"/></g></svg>
<svg style="left:399px;top:254px" width="10" height="8" viewBox="0 0 10 8"><g transform="translate(0.600 0.888) scale(0.4941)"><path d="M1 11.500L6 5.500l3.500 3.500L16 1.500" fill="none" stroke="#5a5f66" stroke-width="2.600"/></g></svg>
<div class="t" style="left:413.700px;top:254.600px;font-size:8.300px;font-weight:bold;color:#5a5f66">Chart</div>
<svg style="left:693px;top:254px" width="11" height="10" viewBox="0 0 11 10"><g transform="translate(0.800 0.200) scale(0.4947)"><circle cx="7.500" cy="7.500" r="6" fill="none" stroke="#464b51" stroke-width="2.200"/><path d="M12 12l6 6" stroke="#464b51" stroke-width="2.300"/></g></svg>
<svg style="left:716px;top:254px" width="8" height="10" viewBox="0 0 8 10"><g transform="translate(0.200 0.250) scale(0.5000)"><path d="M7 0v13M1.500 7.500L7 13l5.500-5.500M1 18h12" fill="none" stroke="#464b51" stroke-width="2"/></g></svg>
<svg style="left:737px;top:254px" width="11" height="10" viewBox="0 0 11 10"><g transform="translate(0.500 0.390) scale(0.4900)"><rect x="1.200" y="1.200" width="17.600" height="15.600" rx="2.500" fill="none" stroke="#4d5258" stroke-width="2.200"/><path d="M10 1v16" stroke="#4d5258" stroke-width="2"/></g></svg>
<div class="a" style="left:198px;top:278.300px;width:395px;height:38.400px;background:#fff;border:1px solid #ebebed"></div>
<div class="a" style="left:198px;top:298.300px;width:395px;height:1px;background:#ebebed"></div>
<div class="a" style="left:219.800px;top:278.300px;width:1px;height:38.400px;background:#ebebed"></div>
<div class="t" style="left:227.600px;top:285.600px;font-size:8.200px;font-weight:bold;color:#1e2125;letter-spacing:-.1px">status</div>
<div class="t" style="left:206.400px;top:304.500px;font-size:8.600px;color:#b8bcc0">1</div>
<div class="t" style="left:227.600px;top:304.700px;font-size:8.300px;color:#4a4f55;letter-spacing:.03px">Statement executed successfully.</div>
<div class="a" style="left:598px;top:274px;width:160px;height:101px;background:#fbfbfb"></div>
<div class="a" style="left:597.500px;top:273px;width:1px;height:102px;background:#e6e8ea"></div>
<div class="a" style="left:605.200px;top:277.600px;width:144.700px;height:79px;border-radius:6px;background:#f2f2f3"></div>
<div class="a" style="left:605.200px;top:359.500px;width:144.700px;height:30px;border-radius:6px;background:#f2f2f3"></div>
<div class="t" style="left:613px;top:288.700px;font-size:7.600px;color:#33373d;letter-spacing:0;-webkit-text-stroke:.25px #33373d">Query Details</div>
<svg style="left:733px;top:291px" width="9" height="3" viewBox="0 0 9 3"><g transform="translate(0.200 0.000) scale(1.0000)"><circle cx="1" cy="1" r=".85" fill="#4a4f55"/><circle cx="3.950" cy="1" r=".85" fill="#4a4f55"/><circle cx="6.900" cy="1" r=".85" fill="#4a4f55"/></g></svg>
<div class="t" style="left:613px;top:311px;font-size:7.500px;color:#6f757c">Query duration</div>
<div class="t" style="left:724.500px;top:311.200px;font-size:7.200px;color:#33373d;letter-spacing:-.1px;-webkit-text-stroke:.25px #33373d">61ms</div>
<div class="a" style="left:613px;top:323.500px;width:107px;height:4.400px;border-radius:2.200px 0 0 2.200px;background:#2d72dc"></div>
<div class="a" style="left:719.300px;top:323.500px;width:23px;height:4.400px;border-radius:0 2.200px 2.200px 0;background:#27c28b"></div>
<div class="t" style="left:613px;top:336.600px;font-size:7.500px;color:#6f757c">Rows</div>
<div class="t" style="left:738.600px;top:336.600px;font-size:7.400px;font-weight:bold;color:#33373d">1</div>
<div class="t" style="left:613px;top:367px;font-size:7.600px;color:#33373d;letter-spacing:-.1px;-webkit-text-stroke:.25px #33373d">status</div>
<div class="t" style="left:732.800px;top:366.300px;font-size:8.400px;color:#8a8f96">Aa</div>
<div class="a" style="left:757.500px;top:273.500px;width:10.500px;height:101.500px;background:#f1f1f1"></div>
<div class="a" style="left:758.500px;top:282.800px;width:8.500px;height:60px;background:#c1c1c1"></div>
<svg style="left:760px;top:277px" width="6" height="3" viewBox="0 0 6 3"><g transform="translate(0.600 0.025) scale(0.5500)"><path d="M0 5l4-5 4 5z" fill="#a3a3a3"/></g></svg>
<svg style="left:760px;top:367px" width="6" height="3" viewBox="0 0 6 3"><g transform="translate(0.600 0.025) scale(0.5500)"><path d="M0 0l4 5 4-5z" fill="#505050"/></g></svg>
<div class="a" style="left:0;top:374.300px;width:768px;height:34px;background:#fff;border-top:1px solid #d9dbde"></div>
<svg style="left:13px;top:385px" width="8" height="11" viewBox="0 0 8 11"><svg x="0.000" y="0.800" width="7.000" height="10.000" viewBox="0 0 14 20" style="position:static"><path d="M1 .5h8.500l4 4V19.500H1z" fill="#fff" stroke="#9fb4cf" stroke-width="1"/><path d="M9.500.5v4h4" fill="#e3ebf5" stroke="#9fb4cf" stroke-width="1"/><rect x="3.500" y="7.500" width="7" height="7" fill="#2f6fb5"/><path d="M3.500 14.500l2.500-3.500 2 2 1-1 1.500 2.500z" fill="#8fd0f0"/></svg></svg>
<div class="t dl" style="left:29.5px">IMG-20210814-W...jpg</div>
<svg style="left:123px;top:389px" width="7" height="5" viewBox="0 0 7 5"><svg x="0.700" y="0.000" width="6.200" height="4.200" viewBox="0 0 12 8" style="position:static"><path d="M1.500 6.500L6 2l4.500 4.500" fill="none" stroke="#5f6368" stroke-width="1.700"/></svg></svg>
<div class="a" style="left:141.7px;top:378px;width:1px;height:26.500px;background:#e0e2e5"></div>
<svg style="left:153px;top:385px" width="8" height="11" viewBox="0 0 8 11"><svg x="0.000" y="0.800" width="7.000" height="10.000" viewBox="0 0 14 20" style="position:static"><path d="M1 .5h8.500l4 4V19.500H1z" fill="#fff" stroke="#9fb4cf" stroke-width="1"/><path d="M9.500.5v4h4" fill="#e3ebf5" stroke="#9fb4cf" stroke-width="1"/><rect x="3.500" y="7.500" width="7" height="7" fill="#2f6fb5"/><path d="M3.500 14.500l2.500-3.500 2 2 1-1 1.500 2.500z" fill="#8fd0f0"/></svg></svg>
<div class="t dl" style="left:169.3px">IMG-20210810-W...jpg</div>
<svg style="left:263px;top:389px" width="7" height="5" viewBox="0 0 7 5"><svg x="0.600" y="0.000" width="6.200" height="4.200" viewBox="0 0 12 8" style="position:static"><path d="M1.500 6.500L6 2l4.500 4.500" fill="none" stroke="#5f6368" stroke-width="1.700"/></svg></svg>
<div class="a" style="left:281.6px;top:378px;width:1px;height:26.500px;background:#e0e2e5"></div>
<svg style="left:293px;top:385px" width="8" height="11" viewBox="0 0 8 11"><svg x="0.000" y="0.800" width="7.000" height="10.000" viewBox="0 0 14 20" style="position:static"><path d="M1 .5h8.500l4 4V19.500H1z" fill="#fff" stroke="#9fb4cf" stroke-width="1"/><path d="M9.500.5v4h4" fill="#e3ebf5" stroke="#9fb4cf" stroke-width="1"/><rect x="3.500" y="7.500" width="7" height="7" fill="#2f6fb5"/><path d="M3.500 14.500l2.500-3.500 2 2 1-1 1.500 2.500z" fill="#8fd0f0"/></svg></svg>
<div class="t dl" style="left:309.1px">IMG-20210814-W...jpg</div>
<svg style="left:403px;top:389px" width="7" height="5" viewBox="0 0 7 5"><svg x="0.400" y="0.000" width="6.200" height="4.200" viewBox="0 0 12 8" style="position:static"><path d="M1.500 6.500L6 2l4.500 4.500" fill="none" stroke="#5f6368" stroke-width="1.700"/></svg></svg>
<div class="a" style="left:421.5px;top:378px;width:1px;height:26.500px;background:#e0e2e5"></div>
<svg style="left:433px;top:385px" width="8" height="11" viewBox="0 0 8 11"><svg x="0.000" y="0.800" width="7.000" height="10.000" viewBox="0 0 14 20" style="position:static"><path d="M1 .5h8.500l4 4V19.500H1z" fill="#fff" stroke="#9fb4cf" stroke-width="1"/><path d="M9.500.5v4h4" fill="#e3ebf5" stroke="#9fb4cf" stroke-width="1"/><rect x="3.500" y="7.500" width="7" height="7" fill="#2f6fb5"/><path d="M3.500 14.500l2.500-3.500 2 2 1-1 1.500 2.500z" fill="#8fd0f0"/></svg></svg>
<div class="t dl" style="left:448.9px">IMG-20210814-W...jpg</div>
<svg style="left:543px;top:389px" width="7" height="5" viewBox="0 0 7 5"><svg x="0.200" y="0.000" width="6.200" height="4.200" viewBox="0 0 12 8" style="position:static"><path d="M1.500 6.500L6 2l4.500 4.500" fill="none" stroke="#5f6368" stroke-width="1.700"/></svg></svg>
<div class="a" style="left:561.4px;top:378px;width:1px;height:26.500px;background:#e0e2e5"></div>
<div class="a" style="left:699.600px;top:381.500px;width:47px;height:19.500px;border:1px solid #dfe1e5;border-radius:3px;background:#fff"></div>
<div class="t" style="left:709.400px;top:387.700px;font-size:7px;font-weight:bold;color:#2a62b0;letter-spacing:-.17px">Show all</div>
<svg style="left:754px;top:388px" width="7" height="7" viewBox="0 0 7 7"><g transform="translate(0.300 0.300) scale(0.6000)"><path d="M.7.700l8.600 8.600M9.300.7L.7 9.300" stroke="#3c4043" stroke-width="1.600"/></g></svg>
<div class="a" style="left:0;top:407.800px;width:768px;height:24.200px;background:#3d3a36"></div>
<svg style="left:9px;top:415px" width="11" height="11" viewBox="0 0 11 11"><g transform="translate(0.500 0.000) scale(0.5000)"><path d="M0 2.800L8.500 1.600V9.400H0zM9.800 1.400L20 0v9.400H9.800zM0 10.600h8.500v7.800L0 17.200zM9.800 10.600H20V20L9.800 18.600z" fill="#fff"/></g></svg>
<div class="a" style="left:28.800px;top:408.300px;width:205.800px;height:23.700px;background:#fff;border-top:1px solid #9a9a9a;border-bottom:1px solid #9a9a9a"></div>
<svg style="left:36px;top:415px" width="11" height="11" viewBox="0 0 11 11"><g transform="translate(0.248 0.200) scale(0.4952)"><circle cx="12.500" cy="7.500" r="6.200" fill="none" stroke="#3a3a3a" stroke-width="1.700"/><path d="M8 12.200L.8 20" stroke="#3a3a3a" stroke-width="1.900"/></g></svg>
<div class="t" style="left:53.200px;top:416.900px;font-size:9.100px;color:#3f3f3f;letter-spacing:-.07px">Type here to search</div>
<svg style="left:244px;top:414px" width="13" height="13" viewBox="0 0 13 13"><g transform="translate(0.000 0.000) scale(1.0000)"><circle cx="5.700" cy="6" r="4.100" fill="none" stroke="#f4f4f4" stroke-width="1.800"/></g></svg>
<svg style="left:272px;top:414px" width="13" height="13" viewBox="0 0 13 13"><g transform="translate(0.000 0.000) scale(1.0000)"><rect x="1.700" y="3.600" width="6.400" height="5" fill="none" stroke="#dcdcdc" stroke-width="1.100"/><path d="M1.200 1.500h7.400M1.200 10.700h7.400" stroke="#cfcfcf" stroke-width="1" stroke-dasharray="1.600 1"/><path d="M10.600 .8v10.600" stroke="#dcdcdc" stroke-width="1.100" stroke-dasharray="2.600 1.200"/></g></svg>
<svg style="left:299px;top:414px" width="15" height="12" viewBox="0 0 15 12"><g transform="translate(0.800 0.032) scale(0.4929)"><path d="M0 2.500a1.500 1.500 0 0 1 1.500-1.500h8l2.500 3H26.500A1.500 1.500 0 0 1 28 5.500V21.500H0z" fill="#e9a825"/><path d="M0 8h28v13.500a1.500 1.500 0 0 1-1.500 1.500H1.500A1.500 1.500 0 0 1 0 21.500z" fill="#fbd55f"/><rect x="7" y="14" width="14" height="9" fill="#3f97d8"/><rect x="10" y="17" width="8" height="6" fill="#fbd55f"/></g></svg>
<div class="a" style="left:297.800px;top:430.600px;width:17.600px;height:1.400px;background:#86b3e6"></div>
<svg style="left:324px;top:412px" width="16" height="15" viewBox="0 0 16 15"><g transform="translate(0.007 0.600) scale(0.4963)"><path d="M0 9L15.500 0 31 9z" fill="#1a62ad"/><rect x="0" y="9" width="31" height="18" fill="#2d9ae2"/><path d="M0 9.500L15.500 19 31 9.500" fill="none" stroke="#e9f5ff" stroke-width="2.200"/><path d="M0 27l11-9M31 27l-11-9" stroke="#57b6f2" stroke-width="1.400"/></g></svg>
<div class="a" style="left:344.500px;top:407.800px;width:23.800px;height:24.200px;background:#c56a2c"></div>
<svg style="left:348px;top:413px" width="17" height="15" viewBox="0 0 17 15"><g transform="translate(0.500 0.506) scale(0.5032)"><circle cx="22" cy="6" r="3.600" fill="#5b5fc7"/><circle cx="14" cy="5" r="4.500" fill="#7b83eb"/><rect x="18" y="10.500" width="10" height="11" rx="3" fill="#5b5fc7"/><rect x="8" y="10" width="14" height="14" rx="3" fill="#7b83eb"/><rect x="0" y="6.500" width="14" height="14" rx="1.500" fill="#4b53bc"/><text x="7" y="17.600" font-size="10.500" font-weight="bold" fill="#fff" text-anchor="middle" font-family="Liberation Sans, sans-serif">T</text><circle cx="24" cy="20" r="6.500" fill="#d92f3a"/></g></svg>
<div class="t" style="left:359px;top:420.600px;font-size:6px;font-weight:bold;color:#fff">1</div>
<svg style="left:376px;top:413px" width="11" height="14" viewBox="0 0 11 14"><g transform="translate(0.500 0.550) scale(0.5000)"><path d="M1 4v16c0 2 3.500 3.500 8 3.500s8-1.500 8-3.500V4z" fill="#c9ced6"/><ellipse cx="9" cy="4" rx="8" ry="3.500" fill="#e6e9ee"/><circle cx="14.500" cy="19.500" r="5" fill="#3fae49"/><path d="M14.500 16.500v6M11.500 19.500h6" stroke="#fff" stroke-width="1.600"/></g></svg>
<svg style="left:397px;top:413px" width="15" height="15" viewBox="0 0 15 15"><g transform="translate(0.800 0.550) scale(0.5000)"><circle cx="14" cy="13.500" r="13.500" fill="#1572c5"/><path d="M1 10C3 3 9 0 14 0c8 0 13.500 5.500 13.500 12 0 4-3 6.500-6.500 6.500-3 0-5-1.500-5-3.500 0-1.500 1-2 1-3.500 0-2.500-2.500-4.500-6-4.500-4 0-8 2-10 3z" fill="#35c1d8"/><path d="M14 27C7 27 1.500 22 1 15c1.500-4 5-6.500 9-6.500-3 2-3.500 6-1.500 9.500 2 3.500 6 5.500 10.500 5-1.500 2-3 4-5 4z" fill="#0c59a4"/><path d="M27 9c1.500 5-1 9.500-6 9.500 5-1 5.500-7 1-10z" fill="#58d56a"/></g></svg>
<svg style="left:422px;top:414px" width="15" height="13" viewBox="0 0 15 13"><g transform="translate(0.000 0.093) scale(0.4966)"><rect x="8" y="0" width="21" height="25" rx="1.500" fill="#2b7cd3"/><rect x="8" y="0" width="21" height="6.500" fill="#41a5ee"/><rect x="8" y="12.500" width="21" height="6.200" fill="#185abd"/><rect x="8" y="18.700" width="21" height="6.300" fill="#103f91"/><rect x="0" y="5" width="15" height="15" rx="1.500" fill="#185abd"/></g></svg>
<div class="t" style="left:424.200px;top:418.200px;font-size:5.600px;font-weight:bold;color:#fff">W</div>
<div class="a" style="left:420px;top:430.600px;width:18px;height:1.400px;background:#86b3e6"></div>
<div class="a" style="left:442.500px;top:407.800px;width:20px;height:24.200px;background:#6c6a66"></div>
<div class="a" style="left:442.500px;top:430.600px;width:20px;height:1.400px;background:#9cc3ee"></div>
<svg style="left:446px;top:413px" width="15" height="14" viewBox="0 0 15 14"><g transform="translate(0.800 0.400) scale(0.5077)"><circle cx="13" cy="13" r="13" fill="#e33b2e"/><path d="M13 13L1.700 6.500A13 13 0 0 0 11 25.800L17 15z" fill="#2ba24c"/><path d="M13 13l6-3h6.500A13 13 0 0 1 11 25.800z" fill="#fcc934"/><circle cx="13" cy="13" r="6" fill="#fff"/><circle cx="13" cy="13" r="4.700" fill="#3b78e7"/></g></svg>
<svg style="left:470px;top:414px" width="16" height="13" viewBox="0 0 16 13"><g transform="translate(0.800 0.093) scale(0.4966)"><rect x="8" y="0" width="21" height="25" rx="1.500" fill="#21a366"/><rect x="8" y="0" width="10.500" height="12.500" fill="#107c41"/><rect x="18.500" y="0" width="10.500" height="12.500" fill="#33c481"/><rect x="8" y="12.500" width="10.500" height="12.500" fill="#185c37"/><rect x="0" y="5" width="15" height="15" rx="1.500" fill="#107c41"/></g></svg>
<div class="t" style="left:473.900px;top:418.200px;font-size:5.600px;font-weight:bold;color:#fff">X</div>
<div class="a" style="left:468.200px;top:430.600px;width:18.800px;height:1.400px;background:#86b3e6"></div>
<svg style="left:497px;top:413px" width="13" height="14" viewBox="0 0 13 14"><g transform="translate(0.000 0.600) scale(0.5000)"><path d="M12 0C8 2 4 2.500 0 2.500V13c0 7 6 11 12 13 6-2 12-6 12-13V2.500C20 2.500 16 2 12 0z" fill="#d8a23a"/><path d="M12 2C8.500 3.600 5.500 4.200 2 4.300V13c0 5.800 5 9.300 10 11 5-1.700 10-5.200 10-11V4.300C18.500 4.200 15.500 3.600 12 2z" fill="#d3222a"/><rect x="6" y="8" width="12" height="9" fill="none" stroke="#fff" stroke-width="1.800"/><path d="M6 12.500h12M10 8v9M14 8v9" stroke="#fff" stroke-width="1.300"/></g></svg>
<div class="a" style="left:494.200px;top:430.600px;width:17.500px;height:1.400px;background:#86b3e6"></div>
<svg style="left:520px;top:413px" width="15" height="14" viewBox="0 0 15 14"><g transform="translate(0.052 0.500) scale(0.4963)"><rect x="1" y="0" width="19" height="15" rx="1" fill="#dfe6f2"/><rect x="2.500" y="1.500" width="16" height="11" fill="#2a56c6"/><path d="M3 12l8-9 7.500 5V12.500z" fill="#4f8df0"/><rect x="7" y="15" width="7" height="3" fill="#b9c2d0"/><rect x="3" y="18" width="15" height="2.500" fill="#dfe6f2"/><circle cx="20" cy="20" r="6.500" fill="#e9edf2"/><circle cx="20" cy="20" r="3" fill="#9aa4b3"/><path d="M20 14l1.500 3M25 22l-3-.5" stroke="#6b7482" stroke-width="1.300"/></g></svg>
<div class="a" style="left:518px;top:430.600px;width:18px;height:1.400px;background:#86b3e6"></div>
<svg style="left:548px;top:413px" width="15" height="14" viewBox="0 0 15 14"><g transform="translate(0.000 0.507) scale(0.5034)"><circle cx="14" cy="13" r="10.500" fill="#f7b52c"/><circle cx="24.500" cy="4" r="2.600" fill="#d8402f"/><path d="M1 9.500h18M0 14h22M3 18.500h17" stroke="#fdeec2" stroke-width="2.200"/></g></svg>
<div class="t" style="left:567.800px;top:415.800px;font-size:8.700px;color:#fff;letter-spacing:-.5px">28°C</div>
<svg style="left:600px;top:418px" width="8" height="6" viewBox="0 0 8 6"><g transform="translate(0.000 0.606) scale(0.4875)"><path d="M1 8.500L8 1.500l7 7" fill="none" stroke="#fff" stroke-width="1.500"/></g></svg>
<svg style="left:613px;top:414px" width="11" height="12" viewBox="0 0 11 12"><g transform="translate(0.500 0.550) scale(0.5000)"><path d="M10 0C7 1.500 3.500 2 0 2v8.500C0 16 5 19.500 10 21c5-1.500 10-5 10-10.500V2c-3.500 0-7-.5-10-2z" fill="#2bb24c"/><path d="M5 10.500l3.500 3.500L15 7" fill="none" stroke="#fff" stroke-width="2.400"/></g></svg>
<svg style="left:629px;top:415px" width="9" height="10" viewBox="0 0 9 10"><g transform="translate(0.000 0.800) scale(0.4941)"><path d="M1 16A15 15 0 0 1 16 1M5.500 16A10.500 10.500 0 0 1 16 5.500M10 16a6 6 0 0 1 6-6" fill="none" stroke="#bdbdbd" stroke-width="1.500"/><circle cx="14.700" cy="14.700" r="1.700" fill="#bdbdbd"/></g></svg>
<svg style="left:642px;top:416px" width="11" height="8" viewBox="0 0 11 8"><g transform="translate(0.000 0.900) scale(0.5000)"><rect x="2.500" y="1" width="16.500" height="10" fill="none" stroke="#e6e6e6" stroke-width="1.500"/><rect x="0" y="3.500" width="2.500" height="5" fill="#e6e6e6"/><rect x="9" y="3" width="8" height="6" fill="#e6e6e6"/></g></svg>
<svg style="left:657px;top:415px" width="9" height="10" viewBox="0 0 9 10"><g transform="translate(0.000 0.844) scale(0.4889)"><path d="M1 6h3.500L9 1.500v14L4.500 11H1z" fill="none" stroke="#e6e6e6" stroke-width="1.400"/><path d="M12 5.500a4 4 0 0 1 0 6M14.500 3a7.500 7.500 0 0 1 0 11" fill="none" stroke="#bdbdbd" stroke-width="1.300"/></g></svg>
<div class="t" style="left:673px;top:416.300px;font-size:7.400px;color:#fff;transform:scaleX(.82);transform-origin:0 0">ENG</div>
<div class="t" style="left:704.800px;top:410.800px;font-size:7.300px;color:#fff;letter-spacing:-.15px">12:09</div>
<div class="t" style="left:694.300px;top:423.400px;font-size:7.300px;color:#fff;letter-spacing:.16px">29-11-2022</div>
<svg style="left:743px;top:415px" width="14" height="15" viewBox="0 0 14 15"><g transform="translate(0.050 0.000) scale(0.5000)"><path d="M1 1h20v13H9l-4 4v-4H1z" fill="#fff"/><path d="M4 5h14M4 8.500h14" stroke="#8a8a8a" stroke-width="1.200"/><circle cx="19.500" cy="20.500" r="6.500" fill="#3d3a36" stroke="#fff" stroke-width="1.400"/></g></svg>
<div class="t" style="left:751.600px;top:422.300px;font-size:6px;color:#fff">1</div>
</body></html>
